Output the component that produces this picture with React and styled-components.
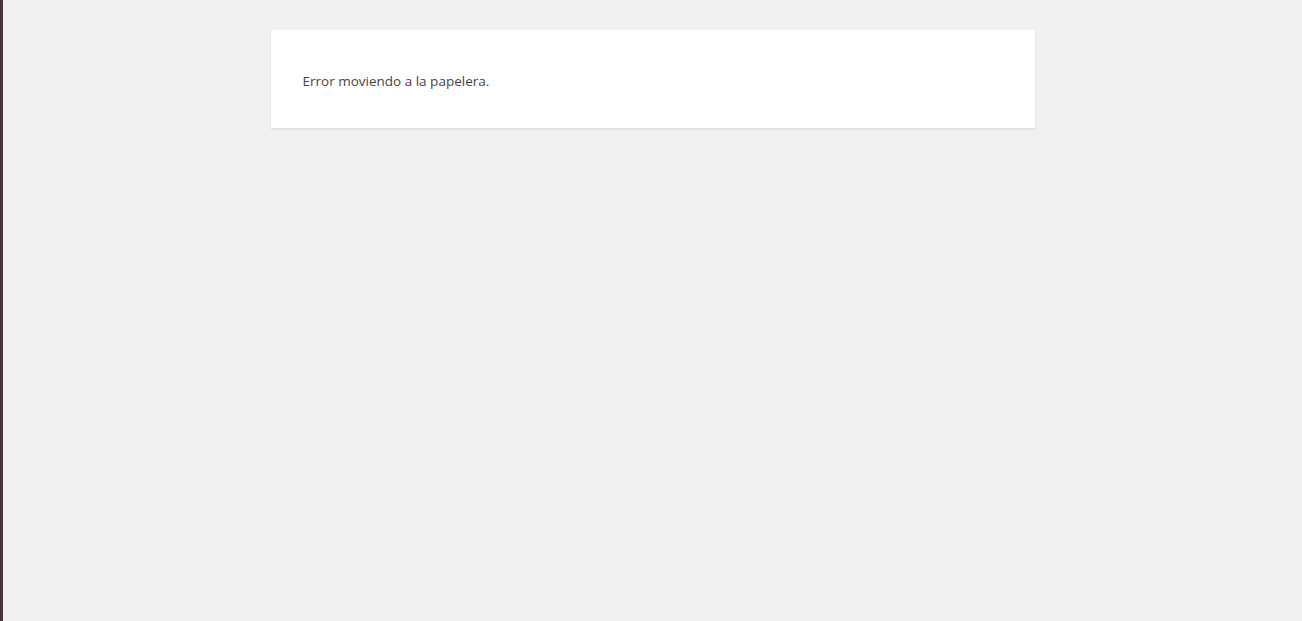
import React from 'react';
import styled, { createGlobalStyle } from 'styled-components';

const GlobalStyle = createGlobalStyle`
    html, body {
        margin: 0;
        padding: 0;
        height: 100%;
        background: #f1f1f1;
    }
    #root {
        height: 100%;
    }
`;

const Page = styled.div`
    display: flex;
    height: 100vh;
    overflow: hidden;
`;

const SideBar = styled.div`
    width: 3px;
    flex-shrink: 0;
    background: #4a3239;
`;

const Main = styled.div`
    flex: 1;
    display: flex;
    justify-content: center;
    align-items: flex-start;
    padding-top: 30px;
`;

const Card = styled.div`
    width: 764px;
    box-sizing: border-box;
    background: #fff;
    padding: 14px 32px;
    box-shadow: 0 1px 2px rgba(0, 0, 0, 0.13);
    font-family: "Open Sans", "Noto Sans", sans-serif;
    color: #444;
`;

const Message = styled.p`
    margin: 27px 0 22px;
    font-size: 13.5px;
    line-height: 21px;
`;

const App = () => {
    return (
        <>
            <GlobalStyle />
            <Page>
                <SideBar />
                <Main>
                    <Card>
                        <Message>Error moviendo a la papelera.</Message>
                    </Card>
                </Main>
            </Page>
        </>
    );
};

export default App;
